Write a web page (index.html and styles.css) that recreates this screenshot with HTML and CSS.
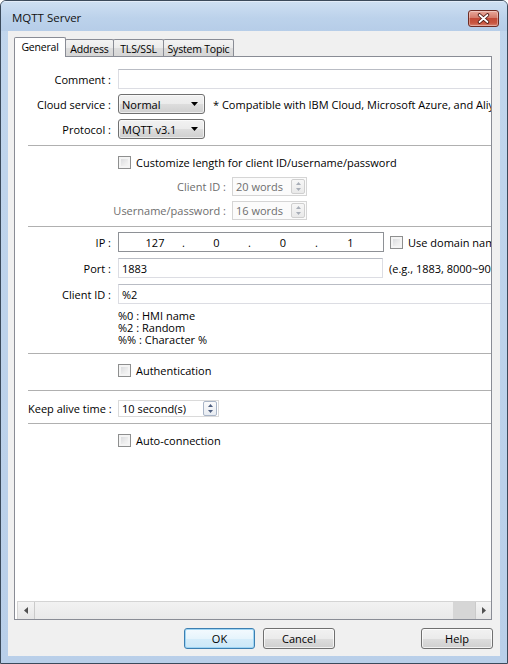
FILE: index.html
```html
<!DOCTYPE html>
<html>
<head>
<meta charset="utf-8">
<title>MQTT Server</title>
<link rel="stylesheet" href="styles.css">
</head>
<body>
<div class="window">
  <div class="titlebar">
    <span class="title">MQTT Server</span>
    <div class="close">
      <svg width="29" height="15" viewBox="0 0 29 15">
        <path d="M10.5 4 L18.5 11 M18.5 4 L10.5 11" stroke="#4a1712" stroke-width="3.6" stroke-linecap="round" fill="none"/>
        <path d="M10.5 4 L18.5 11 M18.5 4 L10.5 11" stroke="#ffffff" stroke-width="1.8" stroke-linecap="round" fill="none"/>
      </svg>
    </div>
  </div>
  <div class="frame">
    <div class="client">
      <div class="tabs">
        <div class="tab active t-general">General</div>
        <div class="tab t-address">Address</div>
        <div class="tab t-tls">TLS/SSL</div>
        <div class="tab t-topic">System Topic</div>
      </div>
      <div class="panel">
        <div class="view">
          <div class="content">
            <div class="row h20">
              <span class="lbl">Comment :</span>
              <div class="text w400"></div>
            </div>
            <div class="row h20 mt5">
              <span class="lbl">Cloud service :</span>
              <div class="select"><span>Normal</span><svg class="caret" width="7" height="4" viewBox="0 0 7 4"><polygon points="0,0 7,0 3.5,4" fill="#000"/></svg></div>
              <span class="note">* Compatible with IBM Cloud, Microsoft Azure, and Aliyun</span>
            </div>
            <div class="row h20 mt5">
              <span class="lbl">Protocol :</span>
              <div class="select"><span>MQTT v3.1</span><svg class="caret" width="7" height="4" viewBox="0 0 7 4"><polygon points="0,0 7,0 3.5,4" fill="#000"/></svg></div>
            </div>
            <div class="sep mt6"></div>
            <div class="row h18 mt7 indent">
              <span class="check"></span>
              <span class="ctext">Customize length for client ID/username/password</span>
            </div>
            <div class="row h19 mt6">
              <span class="lbl lbl-wide dim">Client ID :</span>
              <div class="spin disabled w75"><span>20 words</span>
                <span class="spinbtn"><svg width="5" height="3" viewBox="0 0 5 3"><polygon points="0,3 5,3 2.5,0" fill="#a8aeb8"/></svg><svg width="5" height="3" viewBox="0 0 5 3"><polygon points="0,0 5,0 2.5,3" fill="#a8aeb8"/></svg></span>
              </div>
            </div>
            <div class="row h19 mt5">
              <span class="lbl lbl-wide dim">Username/password :</span>
              <div class="spin disabled w75"><span>16 words</span>
                <span class="spinbtn"><svg width="5" height="3" viewBox="0 0 5 3"><polygon points="0,3 5,3 2.5,0" fill="#a8aeb8"/></svg><svg width="5" height="3" viewBox="0 0 5 3"><polygon points="0,0 5,0 2.5,3" fill="#a8aeb8"/></svg></span>
              </div>
            </div>
            <div class="sep mt6"></div>
            <div class="row h20 mt5">
              <span class="lbl">IP :</span>
              <div class="ip">
                <span class="seg s1">127</span><span class="dot">.</span>
                <span class="seg s2">0</span><span class="dot">.</span>
                <span class="seg s3">0</span><span class="dot">.</span>
                <span class="seg s4">1</span>
              </div>
              <span class="check ml6"></span>
              <span class="ctext">Use domain name</span>
            </div>
            <div class="row h20 mt6">
              <span class="lbl">Port :</span>
              <div class="text w265"><span>1883</span></div>
              <span class="hint">(e.g., 1883, 8000~9000)</span>
            </div>
            <div class="row h20 mt6">
              <span class="lbl">Client ID :</span>
              <div class="text w400"><span>%2</span></div>
            </div>
            <div class="help mt6">
              <div class="hl">%0 : HMI name</div>
              <div class="hl">%2 : Random</div>
              <div class="hl">%% : Character %</div>
            </div>
            <div class="sep mt7"></div>
            <div class="row h18 mt7 indent">
              <span class="check"></span>
              <span class="ctext">Authentication</span>
            </div>
            <div class="sep mt11"></div>
            <div class="row h17 mt9">
              <span class="lbl left">Keep alive time :</span>
              <div class="spin w101"><span>10 second(s)</span>
                <span class="spinbtn active"><svg width="5" height="3" viewBox="0 0 5 3"><polygon points="0,3 5,3 2.5,0" fill="#4e5f80"/></svg><svg width="5" height="3" viewBox="0 0 5 3"><polygon points="0,0 5,0 2.5,3" fill="#4e5f80"/></svg></span>
              </div>
            </div>
            <div class="sep mt6"></div>
            <div class="row h18 mt7 indent">
              <span class="check"></span>
              <span class="ctext">Auto-connection</span>
            </div>
          </div>
        </div>
        <div class="hscroll">
          <div class="sbtn left"><svg width="4" height="7" viewBox="0 0 4 7"><polygon points="4,0 4,7 0,3.5" fill="#505050"/></svg></div>
          <div class="thumb"></div>
          <div class="track"></div>
          <div class="sbtn right"><svg width="4" height="7" viewBox="0 0 4 7"><polygon points="0,0 0,7 4,3.5" fill="#505050"/></svg></div>
        </div>
      </div>
      <div class="buttons">
        <div class="btn default ok">OK</div>
        <div class="btn cancel">Cancel</div>
        <div class="btn help-btn">Help</div>
      </div>
    </div>
  </div>
</div>
</body>
</html>
```

FILE: styles.css
```css
* { box-sizing: border-box; }
html, body { margin: 0; padding: 0; }
body {
  width: 508px;
  height: 664px;
  overflow: hidden;
  background: #ffffff;
  font-family: "Open Sans", "Noto Sans", sans-serif;
  font-size: 11px;
  color: #000;
}
.window {
  width: 508px;
  height: 664px;
  border: 1px solid #3b4a5b;
  border-radius: 6px 6px 0 0;
  background: linear-gradient(180deg, #c1d6ed 0%, #b9cfe9 100%);
  display: flex;
  flex-direction: column;
  overflow: hidden;
}
.titlebar {
  flex: none;
  height: 30px;
  display: flex;
  align-items: flex-start;
  padding: 0 8px 0 11px;
  background: linear-gradient(180deg, #cddff2 0%, #bcd2eb 55%, #b6cde8 100%);
  border-top: 1px solid #e2ecf8;
}
.title {
  margin-top: 9px;
  font-size: 11.5px;
  line-height: 14px;
  color: #111;
}
.close {
  margin-left: auto;
  margin-top: 8px;
  width: 31px;
  height: 17px;
  border: 1px solid #6e2c24;
  border-radius: 3px;
  background: linear-gradient(180deg, #e9a99c 0%, #d47b6a 45%, #c24a37 50%, #c8563f 80%, #d98272 100%);
  box-shadow: inset 0 0 0 1px rgba(255,255,255,0.35);
  display: flex;
  align-items: center;
  justify-content: center;
}
.frame {
  flex: 1;
  display: flex;
  padding: 0 7px 7px 7px;
}
.client {
  flex: 1;
  background: #f0f0f0;
  padding: 6px 8px 7px 6px;
  display: flex;
  flex-direction: column;
}
.tabs {
  height: 20px;
  display: flex;
  align-items: flex-end;
  margin-bottom: -1px;
  position: relative;
  z-index: 1;
}
.tab {
  height: 17px;
  margin-bottom: 1px;
  margin-left: -1px;
  border: 1px solid #898c95;
  border-bottom: none;
  border-radius: 2px 2px 0 0;
  background: linear-gradient(180deg, #f3f3f3 0%, #ebebeb 50%, #dddddd 51%, #d6d6d6 100%);
  display: flex;
  align-items: center;
  justify-content: center;
  font-size: 10.5px;
  letter-spacing: -0.2px;
  line-height: 14px;
  padding-top: 1px;
}
.tab.active {
  height: 20px;
  margin-bottom: 0;
  margin-left: 0;
  background: #ffffff;
  position: relative;
  z-index: 2;
  padding-top: 0;
  padding-bottom: 2px;
}
.t-general { width: 52px; }
.t-address { width: 49px; }
.t-tls { width: 51px; }
.t-topic { width: 71px; }
.panel {
  height: 564px;
  width: 478px;
  border: 1px solid #898c95;
  background: #ffffff;
  display: flex;
  flex-direction: column;
}
.view {
  flex: 1;
  overflow: hidden;
}
.content {
  width: 720px;
  padding-top: 12px;
  white-space: nowrap;
}
.row {
  display: flex;
  align-items: center;
}
.h17 { height: 17px; }
.h18 { height: 18px; }
.h19 { height: 19px; }
.h20 { height: 20px; }
.mt5 { margin-top: 5px; }
.mt6 { margin-top: 6px; }
.mt7 { margin-top: 7px; }
.mt9 { margin-top: 9px; }
.mt11 { margin-top: 11px; }
.lbl {
  flex: none;
  width: 83px;
  margin-left: 13px;
  margin-right: 7px;
  text-align: right;
}
.lbl.left { text-align: left; }
.lbl-wide { width: 198px; margin-right: 6px; }
.dim { color: #6d6d6d; }
.indent { padding-left: 103px; }
.text {
  height: 100%;
  border: 1px solid #dcdde3;
  border-top-color: #b9bcc4;
  background: #fff;
  padding-left: 3px;
  display: flex;
  align-items: center;
}
.w400 { width: 400px; }
.w265 { width: 265px; }
.select {
  width: 87px;
  height: 100%;
  border: 1px solid #707070;
  border-radius: 3px;
  background: linear-gradient(180deg, #f2f2f2 0%, #ebebeb 50%, #dddddd 51%, #cfcfcf 100%);
  box-shadow: inset 0 0 0 1px rgba(255,255,255,0.6);
  display: flex;
  align-items: center;
  padding-left: 3px;
  padding-right: 6px;
}
.select .caret { margin-left: auto; }
.note { margin-left: 8px; }
.sep {
  height: 1px;
  margin-left: 13px;
  width: 700px;
  background: #b0b0b0;
}
.check {
  flex: none;
  width: 13px;
  height: 13px;
  border: 1px solid #8e8f8f;
  background: linear-gradient(135deg, #d2d4d8 0%, #eeeeee 60%, #f8f8f8 100%);
  box-shadow: inset 0 0 0 2px #f4f4f4;
}
.ctext { margin-left: 5px; }
.ml6 { margin-left: 6px; }
.spin {
  height: 100%;
  border: 1px solid #dadada;
  background: #fff;
  display: flex;
  align-items: center;
  padding-left: 3px;
  padding-right: 1px;
}
.spin.disabled {
  background: #fbfbfb;
  color: #6d6d6d;
  border-color: #d5d5d5;
}
.w75 { width: 75px; }
.w101 { width: 101px; }
.spinbtn {
  margin-left: auto;
  width: 14px;
  height: 15px;
  border: 1px solid #cfcfcf;
  border-radius: 2px;
  background: linear-gradient(180deg, #f7f7f7 0%, #e9e9e9 100%);
  display: flex;
  flex-direction: column;
  align-items: center;
  justify-content: center;
  gap: 3px;
}
.spinbtn.active {
  border-color: #a9b5c7;
  background: linear-gradient(180deg, #fbfbfb 0%, #e8ecf2 100%);
}
.spinbtn svg { display: block; }
.ip {
  width: 266px;
  height: 100%;
  border: 1px solid #8e9196;
  background: #fff;
  display: flex;
  align-items: center;
  padding-left: 9px;
}
.seg { text-align: center; }
.s1 { width: 54px; }
.s2 { width: 63px; }
.s3 { width: 64px; }
.s4 { width: 65px; }
.dot { width: 3px; text-align: center; }
.hint { margin-left: 6px; }
.help {
  padding-left: 103px;
}
.hl {
  height: 12px;
  line-height: 12px;
}
.hscroll {
  height: 18px;
  flex: none;
  margin: 0 0 0 2px;
  border-top: 1px solid #d4d4d4;
  border-left: 1px solid #d4d4d4;
  display: flex;
  background: #ececec;
}
.sbtn {
  flex: none;
  display: flex;
  align-items: center;
  justify-content: center;
  background: linear-gradient(180deg, #f4f4f4 0%, #e6e6e6 100%);
}
.sbtn.left { width: 17px; border-right: 1px solid #cacaca; }
.sbtn.right { width: 16px; border-left: 1px solid #cacaca; }
.thumb {
  flex: 1;
  background: linear-gradient(180deg, #f2f2f2 0%, #e9e9e9 100%);
}
.track {
  width: 22px;
  flex: none;
  background: #d6d6d6;
}
.buttons {
  margin-top: 8px;
  height: 21px;
  display: flex;
  padding-left: 170px;
  margin-right: -1px;
}
.btn {
  height: 21px;
  border: 1px solid #707070;
  border-radius: 3px;
  background: linear-gradient(180deg, #f2f2f2 0%, #ebebeb 50%, #dddddd 51%, #cfcfcf 100%);
  box-shadow: inset 0 0 0 1px rgba(255,255,255,0.7);
  display: flex;
  align-items: center;
  justify-content: center;
  line-height: 14px;
}
.btn.default {
  border-color: #3c7fb1;
  background: linear-gradient(180deg, #f4fafe 0%, #e6f4fc 50%, #d6edfa 51%, #cbe7f7 100%);
  box-shadow: inset 0 0 0 1px #9fd5f4;
}
.ok { width: 71px; }
.cancel { width: 72px; margin-left: 8px; }
.help-btn { width: 72px; margin-left: auto; }
```
